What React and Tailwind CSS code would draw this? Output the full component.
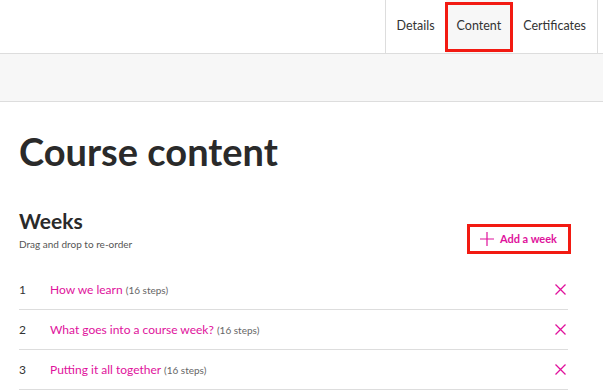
import { useState } from 'react';

const weeks = [
  { id: 1, title: 'How we learn', steps: 16 },
  { id: 2, title: 'What goes into a course week?', steps: 16 },
  { id: 3, title: 'Putting it all together', steps: 16 },
];

const tabs = ['Details', 'Content', 'Certificates'];

export default function App() {
  const [active, setActive] = useState('Content');

  return (
    <div className="min-h-screen bg-white font-['Lato',sans-serif] text-[#333]">
      <header className="flex h-[54px] justify-end border-b border-[#ddd] pr-[5px]">
        <nav className="flex border-x border-[#ddd]">
          {tabs.map((tab) => (
            <button
              key={tab}
              type="button"
              onClick={() => setActive(tab)}
              className={`relative flex items-center px-[11px] text-[12.5px] ${
                active === tab ? 'bg-[#f7f7f7]' : ''
              }`}
            >
              {active === tab ? (
                <span className="absolute inset-x-[-1px] bottom-[1px] top-[2px] border-[3px] border-[#f21a12]" />
              ) : null}
              {tab}
            </button>
          ))}
        </nav>
      </header>
      <div className="h-[48px] border-b border-[#ddd] bg-[#f7f7f7]" />

      <main className="pl-[19px] pr-[35px]">
        <h1 className="mt-[27px] text-[38px] font-bold leading-[44px] text-[#2a2a2a]">Course content</h1>

        <div className="mt-[36px] flex items-end justify-between">
          <div>
            <h2 className="text-[21px] font-bold leading-[24px] text-[#2a2a2a]">Weeks</h2>
            <p className="mt-[4px] text-[10px] leading-[14px] text-[#555]">Drag and drop to re-order</p>
          </div>
          <button
            type="button"
            className="-mr-[3px] mb-[-3px] flex h-[30px] items-center gap-[6px] border-[3px] border-[#f21a12] pl-[10px] pr-[11px] text-[11px] font-bold text-[#e0129c]"
          >
            <svg width="14" height="14" viewBox="0 0 14 14" fill="none" stroke="currentColor" strokeWidth="1.2">
              <path d="M7 0v14M0 7h14" />
            </svg>
            Add a week
          </button>
        </div>

        <ul className="mt-[19px]">
          {weeks.map((week) => (
            <li key={week.id} className="flex h-[40px] items-center border-b border-[#ddd]">
              <span className="w-[31px] text-[12px]">{week.id}</span>
              <span className="flex-1 text-[12px]">
                <a href="#" className="text-[#e0129c]">{week.title}</a>{' '}
                <span className="text-[10px] text-[#666]">({week.steps} steps)</span>
              </span>
              <button type="button" aria-label={`Remove ${week.title}`} className="mr-[2px] text-[#e0129c]">
                <svg width="11" height="11" viewBox="0 0 11 11" fill="none" stroke="currentColor" strokeWidth="1.3">
                  <path d="M0.5 0.5l10 10M10.5 0.5l-10 10" />
                </svg>
              </button>
            </li>
          ))}
        </ul>
      </main>
    </div>
  );
}
